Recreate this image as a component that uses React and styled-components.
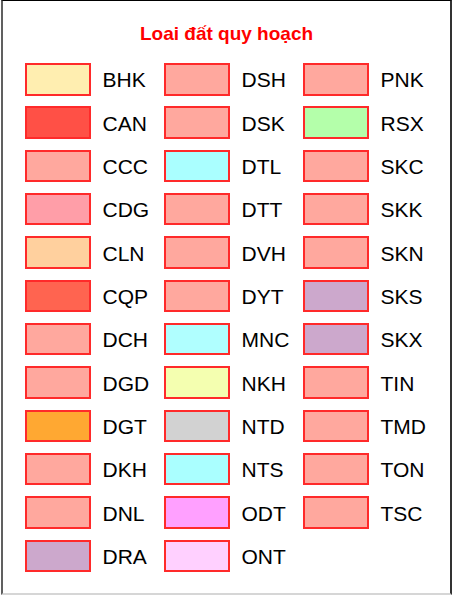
import React from "react";
import styled, { createGlobalStyle } from "styled-components";

const Global = createGlobalStyle`
  html, body { margin: 0; padding: 0; background: #fff; }
  body { font-family: "Liberation Sans", Arial, sans-serif; }
`;

const Frame = styled.div`
  box-sizing: border-box;
  margin-left: 1px;
  width: 451px;
  height: 595px;
  background: #fff;
  border-top: 1px solid #000;
  border-left: 2px solid #606060;
  border-right: 2px solid #333;
  border-bottom: 2px solid #d6d6d6;
  padding: 23px 0 0 22px;
`;

const Title = styled.h1`
  margin: 0 0 19px;
  padding-right: 22px;
  font-size: 19px;
  line-height: 20px;
  font-weight: bold;
  color: #ff0000;
  text-align: center;
`;

const Grid = styled.div`
  display: grid;
  grid-template-columns: repeat(3, 139px);
  grid-template-rows: repeat(12, 32.5px);
  grid-auto-flow: column;
  row-gap: 10.84px;
`;

const Item = styled.div`
  display: flex;
  align-items: center;
  gap: 11.5px;
`;

const Swatch = styled.div`
  box-sizing: border-box;
  width: 66px;
  height: 32.5px;
  border: 2px solid #ff2a2a;
  background: ${(p) => p.$c};
`;

const Label = styled.span`
  font-size: 21px;
  color: #000;
  line-height: 1;
  padding-top: 1px;
`;

const S = "#ffa89e";
const items = [
  ["BHK", "#ffeeb0"], ["CAN", "#ff5046"], ["CCC", S], ["CDG", "#ff9ea8"],
  ["CLN", "#ffd09e"], ["CQP", "#ff6450"], ["DCH", S], ["DGD", S],
  ["DGT", "#ffa832"], ["DKH", S], ["DNL", S], ["DRA", "#cca8cc"],
  ["DSH", S], ["DSK", S], ["DTL", "#aaffff"], ["DTT", S],
  ["DVH", S], ["DYT", S], ["MNC", "#b0ffff"], ["NKH", "#f4ffb0"],
  ["NTD", "#d2d2d2"], ["NTS", "#aaffff"], ["ODT", "#ffa0ff"], ["ONT", "#ffd0ff"],
  ["PNK", S], ["RSX", "#b4ffaa"], ["SKC", S], ["SKK", S],
  ["SKN", S], ["SKS", "#cca8cc"], ["SKX", "#cca8cc"], ["TIN", S],
  ["TMD", S], ["TON", S], ["TSC", S],
];

export default function App() {
  return (
    <>
      <Global />
      <Frame>
        <Title>Loai đất quy hoạch</Title>
        <Grid>
          {items.map(([name, c]) => (
            <Item key={name}>
              <Swatch $c={c} />
              <Label>{name}</Label>
            </Item>
          ))}
        </Grid>
      </Frame>
    </>
  );
}
